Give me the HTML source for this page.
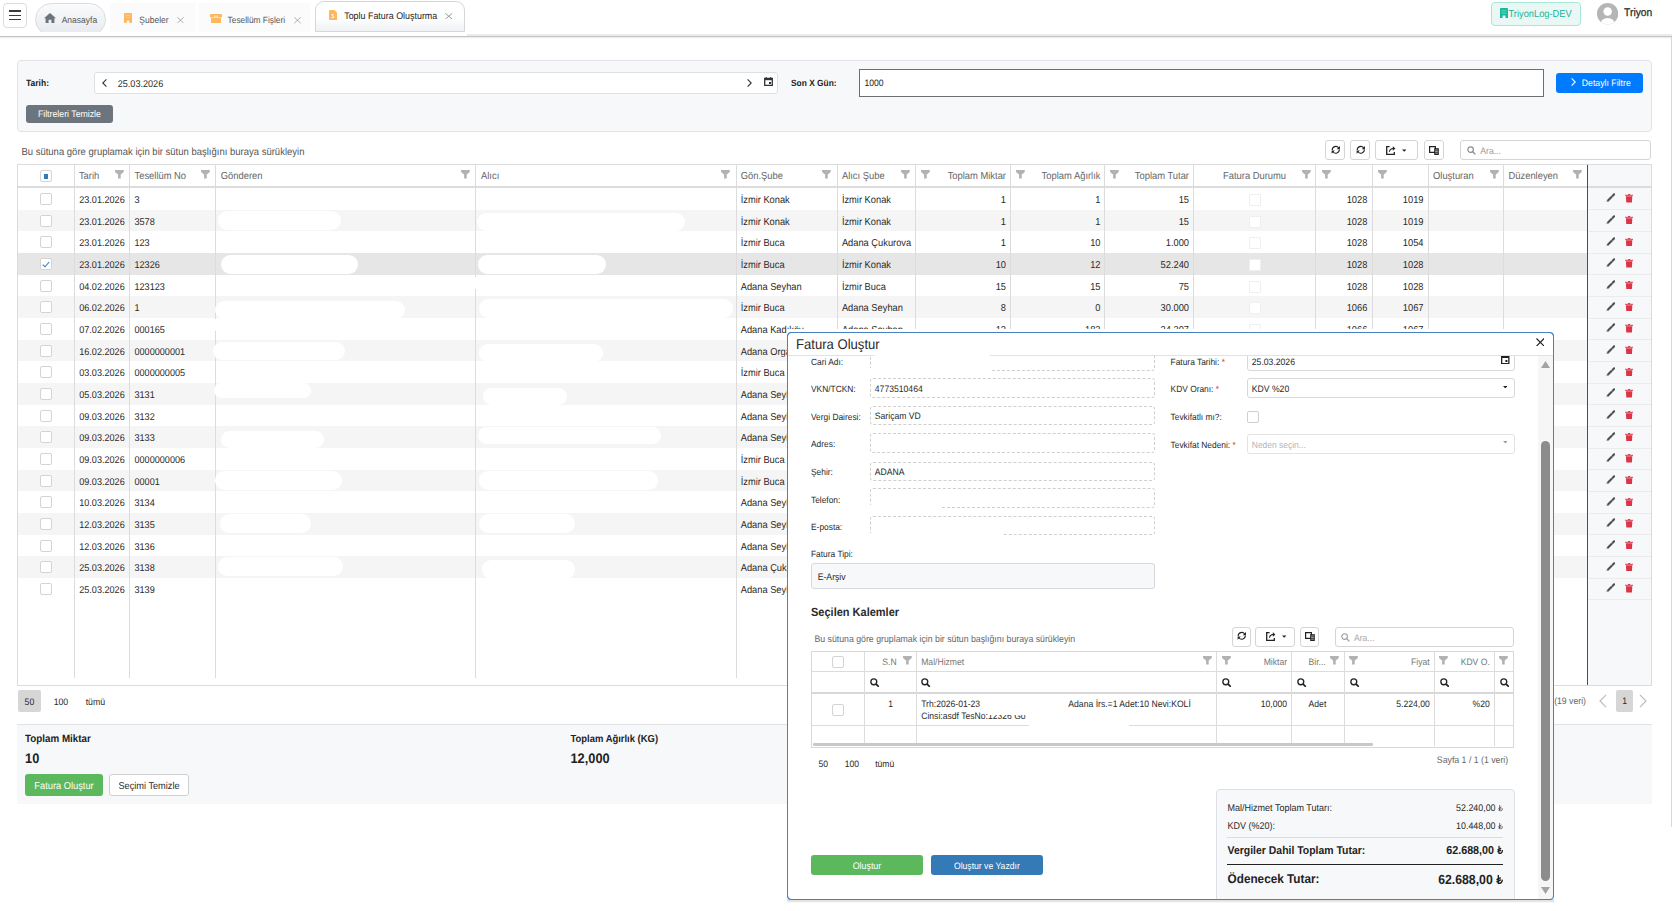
<!DOCTYPE html>
<html><head><meta charset="utf-8"><title>Toplu Fatura Oluşturma</title>
<style>
html,body{margin:0;padding:0;background:#fff;}
body{width:1672px;height:911px;overflow:hidden;position:relative;font-family:"Liberation Sans",sans-serif;color:#333;}
div,svg{position:absolute;box-sizing:border-box;}
svg.il{position:static;display:inline-block;vertical-align:baseline;}
.t{white-space:nowrap;transform:scaleY(1.08);transform-origin:0 50%;text-rendering:geometricPrecision;}
.a{position:absolute;}
</style></head><body>

<div style="left:0.00px;top:0.00px;width:1672.00px;height:36.00px;background:#fff;"></div>
<div style="left:0.00px;top:35.90px;width:1672.00px;height:1.60px;background:#c4c4c4;"></div>
<div style="left:0.00px;top:37.00px;width:1672.00px;height:2.00px;background:linear-gradient(#e8e8e8,#fff);"></div>
<div style="left:3.30px;top:3.30px;width:24.20px;height:25.20px;border:1px solid #dcdcdc;border-radius:4px;background:#fff;"></div>
<div style="left:9.40px;top:10.40px;width:12.10px;height:1.50px;background:#3a3a3a;"></div>
<div style="left:9.40px;top:14.50px;width:12.10px;height:1.50px;background:#3a3a3a;"></div>
<div style="left:9.40px;top:18.60px;width:12.10px;height:1.50px;background:#3a3a3a;"></div>
<div style="left:34px;top:0;width:74px;height:31.7px;overflow:hidden;"><div style="left:1px;top:3px;width:71px;height:33px;border:1px solid #d9dce1;border-radius:17px;background:linear-gradient(#fbfbfc,#e6e9ee);"></div></div>
<svg class="a" style="left:44px;top:12.8px" width="12" height="10" viewBox="0 0 12 10"><path d="M6 0L0 5.2H1.6V10H4.6V6.8H7.4V10H10.4V5.2H12Z" fill="#6c757d"/></svg>
<div class="t" style="left:61.70px;top:12.90px;height:14px;line-height:14px;font-size:8.5px;color:#555;font-weight:normal;">Anasayfa</div>
<div style="left:110.00px;top:3.00px;width:86.00px;height:29.00px;background:#fbfbfb;"></div>
<svg class="a" style="left:124px;top:13px" width="8" height="10" viewBox="0 0 8 10"><path d="M0 1Q0 0 1 0H7Q8 0 8 1V10H5.3V7.5H2.7V10H0Z" fill="#fdb760"/><path d="M1.5 2.3H6.5M1.5 4.3H6.5" stroke="#fdd8a6" stroke-width="0.6"/></svg>
<div class="t" style="left:139.30px;top:12.90px;height:14px;line-height:14px;font-size:8.5px;color:#555;font-weight:normal;">Şubeler</div>
<svg class="a" style="left:177px;top:16.8px" width="7" height="6.5" viewBox="0 0 7 6.5"><path d="M0.3 0.3L6.7 6.2M6.7 0.3L0.3 6.2" stroke="#a8a8a8" stroke-width="0.9"/></svg>
<div style="left:197.50px;top:3.00px;width:112.50px;height:29.00px;background:#fbfbfb;"></div>
<svg class="a" style="left:210px;top:14px" width="12" height="9" viewBox="0 0 12 9"><path d="M0 0.8Q0 0 0.8 0H11.2Q12 0 12 0.8V3.2H0Z" fill="#fdb760"/><path d="M1 3.8H11V8.2Q11 9 10.2 9H1.8Q1 9 1 8.2Z" fill="#fdb760"/><path d="M4 2.2H8" stroke="#fff" stroke-width="0.6"/></svg>
<div class="t" style="left:227.60px;top:13.20px;height:14px;line-height:14px;font-size:8.35px;color:#555;font-weight:normal;">Tesellüm Fişleri</div>
<svg class="a" style="left:294px;top:17px" width="7" height="6.5" viewBox="0 0 7 6.5"><path d="M0.3 0.3L6.7 6.2M6.7 0.3L0.3 6.2" stroke="#a8a8a8" stroke-width="0.9"/></svg>
<div style="left:314.70px;top:0.80px;width:149.90px;height:31.20px;border:1px solid #d6d6d6;border-radius:9px 9px 0 0;background:linear-gradient(#fff 55%,#eff1f4);"></div>
<div style="left:467.00px;top:34.20px;width:1205.00px;height:1.70px;background:#ebebeb;"></div>
<svg class="a" style="left:328.6px;top:9.9px" width="8.2" height="10.2" viewBox="0 0 8.2 10.2"><path d="M0 1Q0 0 1 0H5.4L8.2 2.8V9.2Q8.2 10.2 7.2 10.2H1Q0 10.2 0 9.2Z" fill="#fdb760"/><text x="2.6" y="8.2" font-size="5" fill="#fff" font-family="Liberation Sans">$</text></svg>
<div class="t" style="left:344.20px;top:8.60px;height:14px;line-height:14px;font-size:8.91px;color:#222;font-weight:normal;">Toplu Fatura Oluşturma</div>
<svg class="a" style="left:445.3px;top:12.6px" width="7.6" height="6.5" viewBox="0 0 7.6 6.5"><path d="M0.3 0.3L7.3 6.2M7.3 0.3L0.3 6.2" stroke="#999" stroke-width="1"/></svg>
<div style="left:1491.00px;top:2.10px;width:90.00px;height:23.90px;border:1px solid #a8e6d8;border-radius:4px;background:#e9f8f5;"></div>
<svg class="a" style="left:1499.5px;top:8px" width="8" height="10" viewBox="0 0 8 10"><path d="M0 1Q0 0 1 0H7Q8 0 8 1V10H5.5V7.6H2.5V10H0Z" fill="#17b89a"/><path d="M1.3 2.2H6.7M1.3 3.8H6.7M1.3 5.4H6.7" stroke="#8fe0cf" stroke-width="0.5"/></svg>
<div class="t" style="left:1508.50px;top:7.30px;height:14px;line-height:14px;font-size:9.3px;color:#16b396;font-weight:normal;">TriyonLog-DEV</div>
<svg class="a" style="left:1596.6px;top:3.4px" width="21.3" height="21.3" viewBox="0 0 20 20"><defs><clipPath id="av"><circle cx="10" cy="10" r="10"/></clipPath></defs><circle cx="10" cy="10" r="10" fill="#b5b5b5"/><g clip-path="url(#av)"><circle cx="10" cy="8" r="4" fill="#fff"/><ellipse cx="10" cy="19" rx="6.5" ry="5" fill="#fff"/></g></svg>
<div class="t" style="left:1624.10px;top:7.40px;height:14px;line-height:14px;font-size:10.3px;color:#2a2a2a;font-weight:normal;-webkit-text-stroke:0.25px #2a2a2a;">Triyon</div>
<div style="left:1671.00px;top:37.00px;width:1.00px;height:790.00px;background:#d8d8d8;"></div>
<div style="left:17.00px;top:60.30px;width:1635.00px;height:71.30px;background:#f7f8fa;border:1px solid #e1e4e8;border-radius:4px;"></div>
<div class="t" style="left:26.00px;top:76.00px;height:14px;line-height:14px;font-size:8.5px;color:#222;font-weight:bold;">Tarih:</div>
<div style="left:94.20px;top:72.30px;width:684.20px;height:21.30px;background:#fff;border:1px solid #dde0e4;border-radius:3px;"></div>
<svg class="a" style="left:102px;top:78.5px" width="5" height="8" viewBox="0 0 5 8"><path d="M4.4 0.4L0.8 4L4.4 7.6" stroke="#333" stroke-width="1.1" fill="none"/></svg>
<div class="t" style="left:117.70px;top:76.50px;height:14px;line-height:14px;font-size:9.11px;color:#2a2a2a;font-weight:normal;">25.03.2026</div>
<svg class="a" style="left:746.5px;top:78.5px" width="5" height="8" viewBox="0 0 5 8"><path d="M0.6 0.4L4.2 4L0.6 7.6" stroke="#333" stroke-width="1.1" fill="none"/></svg>
<svg class="a" style="left:763.7px;top:77.2px" width="9" height="9.2" viewBox="0 0 9 9.2"><path d="M0.7 1.5H8.3V8.5H0.7Z" stroke="#333" stroke-width="1.3" fill="none"/><path d="M0.7 1.3H8.3V3.2H0.7Z" fill="#333"/><path d="M2.3 0V1.5M6.7 0V1.5" stroke="#333" stroke-width="1"/><rect x="5" y="5" width="2" height="2" fill="#333"/></svg>
<div class="t" style="left:791.00px;top:75.80px;height:14px;line-height:14px;font-size:8.4px;color:#222;font-weight:bold;">Son X Gün:</div>
<div style="left:859.20px;top:69.00px;width:684.80px;height:27.80px;background:#fff;border:1px solid #6e6e6e;"></div>
<div class="t" style="left:864.50px;top:76.00px;height:14px;line-height:14px;font-size:8.6px;color:#222;font-weight:normal;">1000</div>
<div style="left:1556.00px;top:72.90px;width:87.00px;height:19.90px;background:#007bff;border-radius:3px;"></div>
<svg class="a" style="left:1571px;top:78.3px" width="5" height="8" viewBox="0 0 5 8"><path d="M0.6 0.4L4.2 4L0.6 7.6" stroke="#fff" stroke-width="1.1" fill="none"/></svg>
<div class="t" style="left:1581.80px;top:76.00px;height:14px;line-height:14px;font-size:8.73px;color:#fff;font-weight:normal;">Detaylı Filtre</div>
<div style="left:26.00px;top:104.80px;width:87.00px;height:18.10px;background:#6c757d;border-radius:3px;"></div>
<div class="t" style="left:37.90px;top:106.80px;height:14px;line-height:14px;font-size:8.76px;color:#fff;font-weight:normal;">Filtreleri Temizle</div>
<div class="t" style="left:21.40px;top:145.50px;height:14px;line-height:14px;font-size:9.5px;color:#555;font-weight:normal;">Bu sütuna göre gruplamak için bir sütun başlığını buraya sürükleyin</div>
<div style="left:1325.30px;top:140.20px;width:20.20px;height:20.20px;background:#fff;border:1px solid #d5d5d5;border-radius:3px;"></div>
<svg class="a" style="left:1330.70px;top:145.30px" width="9.6" height="9.6" viewBox="0 0 12 12"><path d="M1.5 6.3A4.5 4.5 0 0 1 9.6 3.6" stroke="#222" stroke-width="1.35" fill="none"/><path d="M11.2 1.2V5.2H7.2Z" fill="#222"/><path d="M10.5 5.7A4.5 4.5 0 0 1 2.4 8.4" stroke="#222" stroke-width="1.35" fill="none"/><path d="M0.8 10.8V6.8H4.8Z" fill="#222"/></svg>
<div style="left:1350.30px;top:140.20px;width:20.20px;height:20.20px;background:#fff;border:1px solid #d5d5d5;border-radius:3px;"></div>
<svg class="a" style="left:1355.70px;top:145.30px" width="9.6" height="9.6" viewBox="0 0 12 12"><path d="M1.5 6.3A4.5 4.5 0 0 1 9.6 3.6" stroke="#222" stroke-width="1.35" fill="none"/><path d="M11.2 1.2V5.2H7.2Z" fill="#222"/><path d="M10.5 5.7A4.5 4.5 0 0 1 2.4 8.4" stroke="#222" stroke-width="1.35" fill="none"/><path d="M0.8 10.8V6.8H4.8Z" fill="#222"/></svg>
<div style="left:1375.40px;top:140.20px;width:42.90px;height:20.20px;background:#fff;border:1px solid #d5d5d5;border-radius:3px;"></div>
<svg class="a" style="left:1386.00px;top:145.70px" width="21" height="9" viewBox="0 0 21 9"><path d="M3.6 0.7H0.7V8.3H8.3V6" stroke="#222" stroke-width="1.3" fill="none"/><path d="M3.4 5.8Q3.8 2.6 7.4 2.5" stroke="#222" stroke-width="1.2" fill="none"/><path d="M6.8 0.3V4.8L9.4 2.5Z" fill="#222"/><path d="M16 3.6H20.4L18.2 5.8Z" fill="#222"/></svg>
<div style="left:1423.50px;top:140.20px;width:20.20px;height:20.20px;background:#fff;border:1px solid #d5d5d5;border-radius:3px;"></div>
<svg class="a" style="left:1428.50px;top:146.00px" width="10" height="9" viewBox="0 0 10 9"><path d="M0.6 0.6H6.4V6.4H0.6Z" stroke="#222" stroke-width="1.2" fill="#fff"/><path d="M5.2 2.2H9.8V9H5.2Z" fill="#222"/><path d="M6.2 4H8.8M6.2 5.6H8.8M6.2 7.2H8.8" stroke="#fff" stroke-width="0.6"/></svg>
<div style="left:1460.40px;top:140.20px;width:190.80px;height:20.20px;background:#fff;border:1px solid #d5d5d5;border-radius:3px;"></div>
<svg class="a" style="left:1466.50px;top:145.80px" width="9" height="9" viewBox="0 0 10 10"><circle cx="4" cy="4" r="3.1" stroke="#888" stroke-width="1.3" fill="none"/><path d="M6.3 6.3L9.3 9.3" stroke="#888" stroke-width="1.5"/></svg>
<div class="t" style="left:1480.20px;top:143.50px;height:14px;line-height:14px;font-size:8.7px;color:#999;font-weight:normal;">Ara...</div>
<div style="left:17.30px;top:164.30px;width:1634.30px;height:522.10px;background:#fff;border:1px solid #dcdcdc;"></div>
<div style="left:1588.00px;top:165.30px;width:62.60px;height:520.10px;background:#f7f8fa;"></div>
<div style="left:1588.00px;top:209.17px;width:62.60px;height:1.00px;background:#ececec;"></div>
<div style="left:18.30px;top:209.67px;width:1568.90px;height:21.67px;background:#f5f5f5;"></div>
<div style="left:1588.00px;top:230.83px;width:62.60px;height:1.00px;background:#ececec;"></div>
<div style="left:1588.00px;top:252.50px;width:62.60px;height:1.00px;background:#ececec;"></div>
<div style="left:18.30px;top:253.00px;width:1568.90px;height:21.67px;background:#e6e6e6;"></div>
<div style="left:1588.00px;top:274.17px;width:62.60px;height:1.00px;background:#ececec;"></div>
<div style="left:1588.00px;top:295.83px;width:62.60px;height:1.00px;background:#ececec;"></div>
<div style="left:18.30px;top:296.33px;width:1568.90px;height:21.67px;background:#f5f5f5;"></div>
<div style="left:1588.00px;top:317.50px;width:62.60px;height:1.00px;background:#ececec;"></div>
<div style="left:1588.00px;top:339.17px;width:62.60px;height:1.00px;background:#ececec;"></div>
<div style="left:18.30px;top:339.67px;width:1568.90px;height:21.67px;background:#f5f5f5;"></div>
<div style="left:1588.00px;top:360.83px;width:62.60px;height:1.00px;background:#ececec;"></div>
<div style="left:1588.00px;top:382.50px;width:62.60px;height:1.00px;background:#ececec;"></div>
<div style="left:18.30px;top:383.00px;width:1568.90px;height:21.67px;background:#f5f5f5;"></div>
<div style="left:1588.00px;top:404.17px;width:62.60px;height:1.00px;background:#ececec;"></div>
<div style="left:1588.00px;top:425.83px;width:62.60px;height:1.00px;background:#ececec;"></div>
<div style="left:18.30px;top:426.33px;width:1568.90px;height:21.67px;background:#f5f5f5;"></div>
<div style="left:1588.00px;top:447.50px;width:62.60px;height:1.00px;background:#ececec;"></div>
<div style="left:1588.00px;top:469.17px;width:62.60px;height:1.00px;background:#ececec;"></div>
<div style="left:18.30px;top:469.67px;width:1568.90px;height:21.67px;background:#f5f5f5;"></div>
<div style="left:1588.00px;top:490.83px;width:62.60px;height:1.00px;background:#ececec;"></div>
<div style="left:1588.00px;top:512.50px;width:62.60px;height:1.00px;background:#ececec;"></div>
<div style="left:18.30px;top:513.00px;width:1568.90px;height:21.67px;background:#f5f5f5;"></div>
<div style="left:1588.00px;top:534.17px;width:62.60px;height:1.00px;background:#ececec;"></div>
<div style="left:1588.00px;top:555.83px;width:62.60px;height:1.00px;background:#ececec;"></div>
<div style="left:18.30px;top:556.33px;width:1568.90px;height:21.67px;background:#f5f5f5;"></div>
<div style="left:1588.00px;top:577.50px;width:62.60px;height:1.00px;background:#ececec;"></div>
<div style="left:1588.00px;top:599.17px;width:62.60px;height:1.00px;background:#ececec;"></div>
<div style="left:18.30px;top:186.10px;width:1632.30px;height:2.00px;background:#dcdcdc;"></div>
<div style="left:73.90px;top:165.30px;width:1.00px;height:512.30px;background:#dcdcdc;"></div>
<div style="left:128.90px;top:165.30px;width:1.00px;height:512.30px;background:#dcdcdc;"></div>
<div style="left:214.80px;top:165.30px;width:1.00px;height:512.30px;background:#dcdcdc;"></div>
<div style="left:474.80px;top:165.30px;width:1.00px;height:512.30px;background:#dcdcdc;"></div>
<div style="left:736.00px;top:165.30px;width:1.00px;height:512.30px;background:#dcdcdc;"></div>
<div style="left:836.90px;top:165.30px;width:1.00px;height:512.30px;background:#dcdcdc;"></div>
<div style="left:915.00px;top:165.30px;width:1.00px;height:512.30px;background:#dcdcdc;"></div>
<div style="left:1009.80px;top:165.30px;width:1.00px;height:512.30px;background:#dcdcdc;"></div>
<div style="left:1104.30px;top:165.30px;width:1.00px;height:512.30px;background:#dcdcdc;"></div>
<div style="left:1193.40px;top:165.30px;width:1.00px;height:512.30px;background:#dcdcdc;"></div>
<div style="left:1314.90px;top:165.30px;width:1.00px;height:512.30px;background:#dcdcdc;"></div>
<div style="left:1372.00px;top:165.30px;width:1.00px;height:512.30px;background:#dcdcdc;"></div>
<div style="left:1427.90px;top:165.30px;width:1.00px;height:512.30px;background:#dcdcdc;"></div>
<div style="left:1502.90px;top:165.30px;width:1.00px;height:512.30px;background:#dcdcdc;"></div>
<div style="left:1586.60px;top:165.30px;width:1.50px;height:520.10px;background:#4a4f55;"></div>
<div style="left:40.30px;top:170.30px;width:11.50px;height:12.20px;background:#fff;border:1px solid #d4d4d4;border-radius:2px;"></div>
<div style="left:44.00px;top:173.90px;width:4.00px;height:5.00px;background:#337ab7;"></div>
<div class="t" style="left:78.90px;top:169.10px;height:14px;line-height:14px;font-size:9.4px;color:#666;font-weight:normal;">Tarih</div>
<svg class="a" style="left:114.90px;top:169.90px" width="9" height="9" viewBox="0 0 9 9"><path d="M0 0H8.8V1.6Q8.8 2.5 5.7 4.4V8.6H3.1V4.4Q0 2.5 0 1.6Z" fill="#b2b2b2"/></svg>
<div class="t" style="left:134.50px;top:169.10px;height:14px;line-height:14px;font-size:9.4px;color:#666;font-weight:normal;">Tesellüm No</div>
<svg class="a" style="left:200.60px;top:169.90px" width="9" height="9" viewBox="0 0 9 9"><path d="M0 0H8.8V1.6Q8.8 2.5 5.7 4.4V8.6H3.1V4.4Q0 2.5 0 1.6Z" fill="#b2b2b2"/></svg>
<div class="t" style="left:220.80px;top:169.10px;height:14px;line-height:14px;font-size:9.4px;color:#666;font-weight:normal;">Gönderen</div>
<svg class="a" style="left:460.80px;top:169.90px" width="9" height="9" viewBox="0 0 9 9"><path d="M0 0H8.8V1.6Q8.8 2.5 5.7 4.4V8.6H3.1V4.4Q0 2.5 0 1.6Z" fill="#b2b2b2"/></svg>
<div class="t" style="left:481.00px;top:169.10px;height:14px;line-height:14px;font-size:9.4px;color:#666;font-weight:normal;">Alıcı</div>
<svg class="a" style="left:721.20px;top:169.90px" width="9" height="9" viewBox="0 0 9 9"><path d="M0 0H8.8V1.6Q8.8 2.5 5.7 4.4V8.6H3.1V4.4Q0 2.5 0 1.6Z" fill="#b2b2b2"/></svg>
<div class="t" style="left:740.70px;top:169.10px;height:14px;line-height:14px;font-size:9.4px;color:#666;font-weight:normal;">Gön.Şube</div>
<svg class="a" style="left:822.40px;top:169.90px" width="9" height="9" viewBox="0 0 9 9"><path d="M0 0H8.8V1.6Q8.8 2.5 5.7 4.4V8.6H3.1V4.4Q0 2.5 0 1.6Z" fill="#b2b2b2"/></svg>
<div class="t" style="left:841.90px;top:169.10px;height:14px;line-height:14px;font-size:9.4px;color:#666;font-weight:normal;">Alıcı Şube</div>
<svg class="a" style="left:900.60px;top:169.90px" width="9" height="9" viewBox="0 0 9 9"><path d="M0 0H8.8V1.6Q8.8 2.5 5.7 4.4V8.6H3.1V4.4Q0 2.5 0 1.6Z" fill="#b2b2b2"/></svg>
<svg class="a" style="left:920.60px;top:169.90px" width="9" height="9" viewBox="0 0 9 9"><path d="M0 0H8.8V1.6Q8.8 2.5 5.7 4.4V8.6H3.1V4.4Q0 2.5 0 1.6Z" fill="#b2b2b2"/></svg>
<div class="t" style="right:666.00px;top:169.10px;height:14px;line-height:14px;font-size:9.4px;color:#666;font-weight:normal;">Toplam Miktar</div>
<svg class="a" style="left:1015.60px;top:169.90px" width="9" height="9" viewBox="0 0 9 9"><path d="M0 0H8.8V1.6Q8.8 2.5 5.7 4.4V8.6H3.1V4.4Q0 2.5 0 1.6Z" fill="#b2b2b2"/></svg>
<div class="t" style="right:571.50px;top:169.10px;height:14px;line-height:14px;font-size:9.4px;color:#666;font-weight:normal;">Toplam Ağırlık</div>
<svg class="a" style="left:1109.60px;top:169.90px" width="9" height="9" viewBox="0 0 9 9"><path d="M0 0H8.8V1.6Q8.8 2.5 5.7 4.4V8.6H3.1V4.4Q0 2.5 0 1.6Z" fill="#b2b2b2"/></svg>
<div class="t" style="right:483.00px;top:169.10px;height:14px;line-height:14px;font-size:9.4px;color:#666;font-weight:normal;">Toplam Tutar</div>
<div class="t" style="left:1223.00px;top:169.10px;height:14px;line-height:14px;font-size:9.4px;color:#666;font-weight:normal;">Fatura Durumu</div>
<svg class="a" style="left:1301.60px;top:169.90px" width="9" height="9" viewBox="0 0 9 9"><path d="M0 0H8.8V1.6Q8.8 2.5 5.7 4.4V8.6H3.1V4.4Q0 2.5 0 1.6Z" fill="#b2b2b2"/></svg>
<svg class="a" style="left:1321.60px;top:169.90px" width="9" height="9" viewBox="0 0 9 9"><path d="M0 0H8.8V1.6Q8.8 2.5 5.7 4.4V8.6H3.1V4.4Q0 2.5 0 1.6Z" fill="#b2b2b2"/></svg>
<svg class="a" style="left:1377.60px;top:169.90px" width="9" height="9" viewBox="0 0 9 9"><path d="M0 0H8.8V1.6Q8.8 2.5 5.7 4.4V8.6H3.1V4.4Q0 2.5 0 1.6Z" fill="#b2b2b2"/></svg>
<div class="t" style="left:1433.00px;top:169.10px;height:14px;line-height:14px;font-size:9.4px;color:#666;font-weight:normal;">Oluşturan</div>
<svg class="a" style="left:1489.60px;top:169.90px" width="9" height="9" viewBox="0 0 9 9"><path d="M0 0H8.8V1.6Q8.8 2.5 5.7 4.4V8.6H3.1V4.4Q0 2.5 0 1.6Z" fill="#b2b2b2"/></svg>
<div class="t" style="left:1508.50px;top:169.10px;height:14px;line-height:14px;font-size:9.4px;color:#666;font-weight:normal;">Düzenleyen</div>
<svg class="a" style="left:1572.60px;top:169.90px" width="9" height="9" viewBox="0 0 9 9"><path d="M0 0H8.8V1.6Q8.8 2.5 5.7 4.4V8.6H3.1V4.4Q0 2.5 0 1.6Z" fill="#b2b2b2"/></svg>
<div style="left:40.20px;top:192.83px;width:11.80px;height:12.20px;background:#fff;border:1px solid #d4d4d4;border-radius:2px;"></div>
<div class="t" style="left:79.20px;top:192.83px;height:14px;line-height:14px;font-size:9.11px;color:#2a2a2a;font-weight:normal;">23.01.2026</div>
<div class="t" style="left:134.50px;top:192.83px;height:14px;line-height:14px;font-size:9.11px;color:#2a2a2a;font-weight:normal;">3</div>
<div class="t" style="left:740.70px;top:192.83px;height:14px;line-height:14px;font-size:9.3px;color:#2a2a2a;font-weight:normal;">İzmir Konak</div>
<div class="t" style="left:841.90px;top:192.83px;height:14px;line-height:14px;font-size:9.3px;color:#2a2a2a;font-weight:normal;">İzmir Konak</div>
<div class="t" style="right:666.00px;top:192.83px;height:14px;line-height:14px;font-size:9.3px;color:#2a2a2a;font-weight:normal;">1</div>
<div class="t" style="right:571.50px;top:192.83px;height:14px;line-height:14px;font-size:9.3px;color:#2a2a2a;font-weight:normal;">1</div>
<div class="t" style="right:483.00px;top:192.83px;height:14px;line-height:14px;font-size:9.3px;color:#2a2a2a;font-weight:normal;">15</div>
<div style="left:1248.50px;top:193.83px;width:12.10px;height:12.00px;background:#fff;border:1px solid #efefef;border-radius:1px;"></div>
<div class="t" style="right:304.70px;top:192.83px;height:14px;line-height:14px;font-size:9.3px;color:#2a2a2a;font-weight:normal;">1028</div>
<div class="t" style="right:248.50px;top:192.83px;height:14px;line-height:14px;font-size:9.3px;color:#2a2a2a;font-weight:normal;">1019</div>
<svg class="a" style="left:1605.6px;top:193.23px" width="9.5" height="9.5" viewBox="0 0 10 10"><path d="M1.6 8.4L6.3 3.7" stroke="#505050" stroke-width="2.3"/><path d="M1.4 8.6L0.9 9.1" stroke="#505050" stroke-width="1.4"/><path d="M7.1 2.9L8.6 1.4" stroke="#505050" stroke-width="2.3" stroke-linecap="round"/></svg>
<svg class="a" style="left:1625px;top:194.23px" width="8.2" height="8.6" viewBox="0 0 8 8.6"><path d="M0 0.8H8V1.8H0Z" fill="#dc3545"/><path d="M3 0H5V1H3Z" fill="#dc3545"/><path d="M0.8 2.2H7.2L6.8 8.6H1.2Z" fill="#dc3545"/></svg>
<div style="left:40.20px;top:214.50px;width:11.80px;height:12.20px;background:#fff;border:1px solid #d4d4d4;border-radius:2px;"></div>
<div class="t" style="left:79.20px;top:214.50px;height:14px;line-height:14px;font-size:9.11px;color:#2a2a2a;font-weight:normal;">23.01.2026</div>
<div class="t" style="left:134.50px;top:214.50px;height:14px;line-height:14px;font-size:9.11px;color:#2a2a2a;font-weight:normal;">3578</div>
<div class="t" style="left:740.70px;top:214.50px;height:14px;line-height:14px;font-size:9.3px;color:#2a2a2a;font-weight:normal;">İzmir Konak</div>
<div class="t" style="left:841.90px;top:214.50px;height:14px;line-height:14px;font-size:9.3px;color:#2a2a2a;font-weight:normal;">İzmir Konak</div>
<div class="t" style="right:666.00px;top:214.50px;height:14px;line-height:14px;font-size:9.3px;color:#2a2a2a;font-weight:normal;">1</div>
<div class="t" style="right:571.50px;top:214.50px;height:14px;line-height:14px;font-size:9.3px;color:#2a2a2a;font-weight:normal;">1</div>
<div class="t" style="right:483.00px;top:214.50px;height:14px;line-height:14px;font-size:9.3px;color:#2a2a2a;font-weight:normal;">15</div>
<div style="left:1248.50px;top:215.50px;width:12.10px;height:12.00px;background:#fff;border:1px solid #efefef;border-radius:1px;"></div>
<div class="t" style="right:304.70px;top:214.50px;height:14px;line-height:14px;font-size:9.3px;color:#2a2a2a;font-weight:normal;">1028</div>
<div class="t" style="right:248.50px;top:214.50px;height:14px;line-height:14px;font-size:9.3px;color:#2a2a2a;font-weight:normal;">1019</div>
<svg class="a" style="left:1605.6px;top:214.90px" width="9.5" height="9.5" viewBox="0 0 10 10"><path d="M1.6 8.4L6.3 3.7" stroke="#505050" stroke-width="2.3"/><path d="M1.4 8.6L0.9 9.1" stroke="#505050" stroke-width="1.4"/><path d="M7.1 2.9L8.6 1.4" stroke="#505050" stroke-width="2.3" stroke-linecap="round"/></svg>
<svg class="a" style="left:1625px;top:215.90px" width="8.2" height="8.6" viewBox="0 0 8 8.6"><path d="M0 0.8H8V1.8H0Z" fill="#dc3545"/><path d="M3 0H5V1H3Z" fill="#dc3545"/><path d="M0.8 2.2H7.2L6.8 8.6H1.2Z" fill="#dc3545"/></svg>
<div style="left:40.20px;top:236.17px;width:11.80px;height:12.20px;background:#fff;border:1px solid #d4d4d4;border-radius:2px;"></div>
<div class="t" style="left:79.20px;top:236.17px;height:14px;line-height:14px;font-size:9.11px;color:#2a2a2a;font-weight:normal;">23.01.2026</div>
<div class="t" style="left:134.50px;top:236.17px;height:14px;line-height:14px;font-size:9.11px;color:#2a2a2a;font-weight:normal;">123</div>
<div class="t" style="left:740.70px;top:236.17px;height:14px;line-height:14px;font-size:9.3px;color:#2a2a2a;font-weight:normal;">İzmir Buca</div>
<div class="t" style="left:841.90px;top:236.17px;height:14px;line-height:14px;font-size:9.3px;color:#2a2a2a;font-weight:normal;">Adana Çukurova</div>
<div class="t" style="right:666.00px;top:236.17px;height:14px;line-height:14px;font-size:9.3px;color:#2a2a2a;font-weight:normal;">1</div>
<div class="t" style="right:571.50px;top:236.17px;height:14px;line-height:14px;font-size:9.3px;color:#2a2a2a;font-weight:normal;">10</div>
<div class="t" style="right:483.00px;top:236.17px;height:14px;line-height:14px;font-size:9.3px;color:#2a2a2a;font-weight:normal;">1.000</div>
<div style="left:1248.50px;top:237.17px;width:12.10px;height:12.00px;background:#fff;border:1px solid #efefef;border-radius:1px;"></div>
<div class="t" style="right:304.70px;top:236.17px;height:14px;line-height:14px;font-size:9.3px;color:#2a2a2a;font-weight:normal;">1028</div>
<div class="t" style="right:248.50px;top:236.17px;height:14px;line-height:14px;font-size:9.3px;color:#2a2a2a;font-weight:normal;">1054</div>
<svg class="a" style="left:1605.6px;top:236.57px" width="9.5" height="9.5" viewBox="0 0 10 10"><path d="M1.6 8.4L6.3 3.7" stroke="#505050" stroke-width="2.3"/><path d="M1.4 8.6L0.9 9.1" stroke="#505050" stroke-width="1.4"/><path d="M7.1 2.9L8.6 1.4" stroke="#505050" stroke-width="2.3" stroke-linecap="round"/></svg>
<svg class="a" style="left:1625px;top:237.57px" width="8.2" height="8.6" viewBox="0 0 8 8.6"><path d="M0 0.8H8V1.8H0Z" fill="#dc3545"/><path d="M3 0H5V1H3Z" fill="#dc3545"/><path d="M0.8 2.2H7.2L6.8 8.6H1.2Z" fill="#dc3545"/></svg>
<div style="left:40.20px;top:257.83px;width:11.80px;height:12.20px;background:#fff;border:1px solid #d4d4d4;border-radius:2px;"></div>
<svg class="a" style="left:42px;top:260.83px" width="8" height="7" viewBox="0 0 8 7"><path d="M0.8 3.6L3 5.8L7.2 1" stroke="#337ab7" stroke-width="1.1" fill="none"/></svg>
<div class="t" style="left:79.20px;top:257.83px;height:14px;line-height:14px;font-size:9.11px;color:#2a2a2a;font-weight:normal;">23.01.2026</div>
<div class="t" style="left:134.50px;top:257.83px;height:14px;line-height:14px;font-size:9.11px;color:#2a2a2a;font-weight:normal;">12326</div>
<div class="t" style="left:740.70px;top:257.83px;height:14px;line-height:14px;font-size:9.3px;color:#2a2a2a;font-weight:normal;">İzmir Buca</div>
<div class="t" style="left:841.90px;top:257.83px;height:14px;line-height:14px;font-size:9.3px;color:#2a2a2a;font-weight:normal;">İzmir Konak</div>
<div class="t" style="right:666.00px;top:257.83px;height:14px;line-height:14px;font-size:9.3px;color:#2a2a2a;font-weight:normal;">10</div>
<div class="t" style="right:571.50px;top:257.83px;height:14px;line-height:14px;font-size:9.3px;color:#2a2a2a;font-weight:normal;">12</div>
<div class="t" style="right:483.00px;top:257.83px;height:14px;line-height:14px;font-size:9.3px;color:#2a2a2a;font-weight:normal;">52.240</div>
<div style="left:1248.50px;top:258.83px;width:12.10px;height:12.00px;background:#fff;border:1px solid #efefef;border-radius:1px;"></div>
<div class="t" style="right:304.70px;top:257.83px;height:14px;line-height:14px;font-size:9.3px;color:#2a2a2a;font-weight:normal;">1028</div>
<div class="t" style="right:248.50px;top:257.83px;height:14px;line-height:14px;font-size:9.3px;color:#2a2a2a;font-weight:normal;">1028</div>
<svg class="a" style="left:1605.6px;top:258.23px" width="9.5" height="9.5" viewBox="0 0 10 10"><path d="M1.6 8.4L6.3 3.7" stroke="#505050" stroke-width="2.3"/><path d="M1.4 8.6L0.9 9.1" stroke="#505050" stroke-width="1.4"/><path d="M7.1 2.9L8.6 1.4" stroke="#505050" stroke-width="2.3" stroke-linecap="round"/></svg>
<svg class="a" style="left:1625px;top:259.23px" width="8.2" height="8.6" viewBox="0 0 8 8.6"><path d="M0 0.8H8V1.8H0Z" fill="#dc3545"/><path d="M3 0H5V1H3Z" fill="#dc3545"/><path d="M0.8 2.2H7.2L6.8 8.6H1.2Z" fill="#dc3545"/></svg>
<div style="left:40.20px;top:279.50px;width:11.80px;height:12.20px;background:#fff;border:1px solid #d4d4d4;border-radius:2px;"></div>
<div class="t" style="left:79.20px;top:279.50px;height:14px;line-height:14px;font-size:9.11px;color:#2a2a2a;font-weight:normal;">04.02.2026</div>
<div class="t" style="left:134.50px;top:279.50px;height:14px;line-height:14px;font-size:9.11px;color:#2a2a2a;font-weight:normal;">123123</div>
<div class="t" style="left:740.70px;top:279.50px;height:14px;line-height:14px;font-size:9.3px;color:#2a2a2a;font-weight:normal;">Adana Seyhan</div>
<div class="t" style="left:841.90px;top:279.50px;height:14px;line-height:14px;font-size:9.3px;color:#2a2a2a;font-weight:normal;">İzmir Buca</div>
<div class="t" style="right:666.00px;top:279.50px;height:14px;line-height:14px;font-size:9.3px;color:#2a2a2a;font-weight:normal;">15</div>
<div class="t" style="right:571.50px;top:279.50px;height:14px;line-height:14px;font-size:9.3px;color:#2a2a2a;font-weight:normal;">15</div>
<div class="t" style="right:483.00px;top:279.50px;height:14px;line-height:14px;font-size:9.3px;color:#2a2a2a;font-weight:normal;">75</div>
<div style="left:1248.50px;top:280.50px;width:12.10px;height:12.00px;background:#fff;border:1px solid #efefef;border-radius:1px;"></div>
<div class="t" style="right:304.70px;top:279.50px;height:14px;line-height:14px;font-size:9.3px;color:#2a2a2a;font-weight:normal;">1028</div>
<div class="t" style="right:248.50px;top:279.50px;height:14px;line-height:14px;font-size:9.3px;color:#2a2a2a;font-weight:normal;">1028</div>
<svg class="a" style="left:1605.6px;top:279.90px" width="9.5" height="9.5" viewBox="0 0 10 10"><path d="M1.6 8.4L6.3 3.7" stroke="#505050" stroke-width="2.3"/><path d="M1.4 8.6L0.9 9.1" stroke="#505050" stroke-width="1.4"/><path d="M7.1 2.9L8.6 1.4" stroke="#505050" stroke-width="2.3" stroke-linecap="round"/></svg>
<svg class="a" style="left:1625px;top:280.90px" width="8.2" height="8.6" viewBox="0 0 8 8.6"><path d="M0 0.8H8V1.8H0Z" fill="#dc3545"/><path d="M3 0H5V1H3Z" fill="#dc3545"/><path d="M0.8 2.2H7.2L6.8 8.6H1.2Z" fill="#dc3545"/></svg>
<div style="left:40.20px;top:301.17px;width:11.80px;height:12.20px;background:#fff;border:1px solid #d4d4d4;border-radius:2px;"></div>
<div class="t" style="left:79.20px;top:301.17px;height:14px;line-height:14px;font-size:9.11px;color:#2a2a2a;font-weight:normal;">06.02.2026</div>
<div class="t" style="left:134.50px;top:301.17px;height:14px;line-height:14px;font-size:9.11px;color:#2a2a2a;font-weight:normal;">1</div>
<div class="t" style="left:740.70px;top:301.17px;height:14px;line-height:14px;font-size:9.3px;color:#2a2a2a;font-weight:normal;">İzmir Buca</div>
<div class="t" style="left:841.90px;top:301.17px;height:14px;line-height:14px;font-size:9.3px;color:#2a2a2a;font-weight:normal;">Adana Seyhan</div>
<div class="t" style="right:666.00px;top:301.17px;height:14px;line-height:14px;font-size:9.3px;color:#2a2a2a;font-weight:normal;">8</div>
<div class="t" style="right:571.50px;top:301.17px;height:14px;line-height:14px;font-size:9.3px;color:#2a2a2a;font-weight:normal;">0</div>
<div class="t" style="right:483.00px;top:301.17px;height:14px;line-height:14px;font-size:9.3px;color:#2a2a2a;font-weight:normal;">30.000</div>
<div style="left:1248.50px;top:302.17px;width:12.10px;height:12.00px;background:#fff;border:1px solid #efefef;border-radius:1px;"></div>
<div class="t" style="right:304.70px;top:301.17px;height:14px;line-height:14px;font-size:9.3px;color:#2a2a2a;font-weight:normal;">1066</div>
<div class="t" style="right:248.50px;top:301.17px;height:14px;line-height:14px;font-size:9.3px;color:#2a2a2a;font-weight:normal;">1067</div>
<svg class="a" style="left:1605.6px;top:301.57px" width="9.5" height="9.5" viewBox="0 0 10 10"><path d="M1.6 8.4L6.3 3.7" stroke="#505050" stroke-width="2.3"/><path d="M1.4 8.6L0.9 9.1" stroke="#505050" stroke-width="1.4"/><path d="M7.1 2.9L8.6 1.4" stroke="#505050" stroke-width="2.3" stroke-linecap="round"/></svg>
<svg class="a" style="left:1625px;top:302.57px" width="8.2" height="8.6" viewBox="0 0 8 8.6"><path d="M0 0.8H8V1.8H0Z" fill="#dc3545"/><path d="M3 0H5V1H3Z" fill="#dc3545"/><path d="M0.8 2.2H7.2L6.8 8.6H1.2Z" fill="#dc3545"/></svg>
<div style="left:40.20px;top:322.83px;width:11.80px;height:12.20px;background:#fff;border:1px solid #d4d4d4;border-radius:2px;"></div>
<div class="t" style="left:79.20px;top:322.83px;height:14px;line-height:14px;font-size:9.11px;color:#2a2a2a;font-weight:normal;">07.02.2026</div>
<div class="t" style="left:134.50px;top:322.83px;height:14px;line-height:14px;font-size:9.11px;color:#2a2a2a;font-weight:normal;">000165</div>
<div class="t" style="left:740.70px;top:322.83px;height:14px;line-height:14px;font-size:9.3px;color:#2a2a2a;font-weight:normal;">Adana Kadıköy</div>
<div class="t" style="left:841.90px;top:322.83px;height:14px;line-height:14px;font-size:9.3px;color:#2a2a2a;font-weight:normal;">Adana Seyhan</div>
<div class="t" style="right:666.00px;top:322.83px;height:14px;line-height:14px;font-size:9.3px;color:#2a2a2a;font-weight:normal;">12</div>
<div class="t" style="right:571.50px;top:322.83px;height:14px;line-height:14px;font-size:9.3px;color:#2a2a2a;font-weight:normal;">183</div>
<div class="t" style="right:483.00px;top:322.83px;height:14px;line-height:14px;font-size:9.3px;color:#2a2a2a;font-weight:normal;">24.307</div>
<div style="left:1248.50px;top:323.83px;width:12.10px;height:12.00px;background:#fff;border:1px solid #efefef;border-radius:1px;"></div>
<div class="t" style="right:304.70px;top:322.83px;height:14px;line-height:14px;font-size:9.3px;color:#2a2a2a;font-weight:normal;">1066</div>
<div class="t" style="right:248.50px;top:322.83px;height:14px;line-height:14px;font-size:9.3px;color:#2a2a2a;font-weight:normal;">1067</div>
<svg class="a" style="left:1605.6px;top:323.23px" width="9.5" height="9.5" viewBox="0 0 10 10"><path d="M1.6 8.4L6.3 3.7" stroke="#505050" stroke-width="2.3"/><path d="M1.4 8.6L0.9 9.1" stroke="#505050" stroke-width="1.4"/><path d="M7.1 2.9L8.6 1.4" stroke="#505050" stroke-width="2.3" stroke-linecap="round"/></svg>
<svg class="a" style="left:1625px;top:324.23px" width="8.2" height="8.6" viewBox="0 0 8 8.6"><path d="M0 0.8H8V1.8H0Z" fill="#dc3545"/><path d="M3 0H5V1H3Z" fill="#dc3545"/><path d="M0.8 2.2H7.2L6.8 8.6H1.2Z" fill="#dc3545"/></svg>
<div style="left:40.20px;top:344.50px;width:11.80px;height:12.20px;background:#fff;border:1px solid #d4d4d4;border-radius:2px;"></div>
<div class="t" style="left:79.20px;top:344.50px;height:14px;line-height:14px;font-size:9.11px;color:#2a2a2a;font-weight:normal;">16.02.2026</div>
<div class="t" style="left:134.50px;top:344.50px;height:14px;line-height:14px;font-size:9.11px;color:#2a2a2a;font-weight:normal;">0000000001</div>
<div class="t" style="left:740.70px;top:344.50px;height:14px;line-height:14px;font-size:9.3px;color:#2a2a2a;font-weight:normal;">Adana Organize</div>
<svg class="a" style="left:1605.6px;top:344.90px" width="9.5" height="9.5" viewBox="0 0 10 10"><path d="M1.6 8.4L6.3 3.7" stroke="#505050" stroke-width="2.3"/><path d="M1.4 8.6L0.9 9.1" stroke="#505050" stroke-width="1.4"/><path d="M7.1 2.9L8.6 1.4" stroke="#505050" stroke-width="2.3" stroke-linecap="round"/></svg>
<svg class="a" style="left:1625px;top:345.90px" width="8.2" height="8.6" viewBox="0 0 8 8.6"><path d="M0 0.8H8V1.8H0Z" fill="#dc3545"/><path d="M3 0H5V1H3Z" fill="#dc3545"/><path d="M0.8 2.2H7.2L6.8 8.6H1.2Z" fill="#dc3545"/></svg>
<div style="left:40.20px;top:366.17px;width:11.80px;height:12.20px;background:#fff;border:1px solid #d4d4d4;border-radius:2px;"></div>
<div class="t" style="left:79.20px;top:366.17px;height:14px;line-height:14px;font-size:9.11px;color:#2a2a2a;font-weight:normal;">03.03.2026</div>
<div class="t" style="left:134.50px;top:366.17px;height:14px;line-height:14px;font-size:9.11px;color:#2a2a2a;font-weight:normal;">0000000005</div>
<div class="t" style="left:740.70px;top:366.17px;height:14px;line-height:14px;font-size:9.3px;color:#2a2a2a;font-weight:normal;">İzmir Buca</div>
<svg class="a" style="left:1605.6px;top:366.57px" width="9.5" height="9.5" viewBox="0 0 10 10"><path d="M1.6 8.4L6.3 3.7" stroke="#505050" stroke-width="2.3"/><path d="M1.4 8.6L0.9 9.1" stroke="#505050" stroke-width="1.4"/><path d="M7.1 2.9L8.6 1.4" stroke="#505050" stroke-width="2.3" stroke-linecap="round"/></svg>
<svg class="a" style="left:1625px;top:367.57px" width="8.2" height="8.6" viewBox="0 0 8 8.6"><path d="M0 0.8H8V1.8H0Z" fill="#dc3545"/><path d="M3 0H5V1H3Z" fill="#dc3545"/><path d="M0.8 2.2H7.2L6.8 8.6H1.2Z" fill="#dc3545"/></svg>
<div style="left:40.20px;top:387.83px;width:11.80px;height:12.20px;background:#fff;border:1px solid #d4d4d4;border-radius:2px;"></div>
<div class="t" style="left:79.20px;top:387.83px;height:14px;line-height:14px;font-size:9.11px;color:#2a2a2a;font-weight:normal;">05.03.2026</div>
<div class="t" style="left:134.50px;top:387.83px;height:14px;line-height:14px;font-size:9.11px;color:#2a2a2a;font-weight:normal;">3131</div>
<div class="t" style="left:740.70px;top:387.83px;height:14px;line-height:14px;font-size:9.3px;color:#2a2a2a;font-weight:normal;">Adana Seyhan</div>
<svg class="a" style="left:1605.6px;top:388.23px" width="9.5" height="9.5" viewBox="0 0 10 10"><path d="M1.6 8.4L6.3 3.7" stroke="#505050" stroke-width="2.3"/><path d="M1.4 8.6L0.9 9.1" stroke="#505050" stroke-width="1.4"/><path d="M7.1 2.9L8.6 1.4" stroke="#505050" stroke-width="2.3" stroke-linecap="round"/></svg>
<svg class="a" style="left:1625px;top:389.23px" width="8.2" height="8.6" viewBox="0 0 8 8.6"><path d="M0 0.8H8V1.8H0Z" fill="#dc3545"/><path d="M3 0H5V1H3Z" fill="#dc3545"/><path d="M0.8 2.2H7.2L6.8 8.6H1.2Z" fill="#dc3545"/></svg>
<div style="left:40.20px;top:409.50px;width:11.80px;height:12.20px;background:#fff;border:1px solid #d4d4d4;border-radius:2px;"></div>
<div class="t" style="left:79.20px;top:409.50px;height:14px;line-height:14px;font-size:9.11px;color:#2a2a2a;font-weight:normal;">09.03.2026</div>
<div class="t" style="left:134.50px;top:409.50px;height:14px;line-height:14px;font-size:9.11px;color:#2a2a2a;font-weight:normal;">3132</div>
<div class="t" style="left:740.70px;top:409.50px;height:14px;line-height:14px;font-size:9.3px;color:#2a2a2a;font-weight:normal;">Adana Seyhan</div>
<svg class="a" style="left:1605.6px;top:409.90px" width="9.5" height="9.5" viewBox="0 0 10 10"><path d="M1.6 8.4L6.3 3.7" stroke="#505050" stroke-width="2.3"/><path d="M1.4 8.6L0.9 9.1" stroke="#505050" stroke-width="1.4"/><path d="M7.1 2.9L8.6 1.4" stroke="#505050" stroke-width="2.3" stroke-linecap="round"/></svg>
<svg class="a" style="left:1625px;top:410.90px" width="8.2" height="8.6" viewBox="0 0 8 8.6"><path d="M0 0.8H8V1.8H0Z" fill="#dc3545"/><path d="M3 0H5V1H3Z" fill="#dc3545"/><path d="M0.8 2.2H7.2L6.8 8.6H1.2Z" fill="#dc3545"/></svg>
<div style="left:40.20px;top:431.17px;width:11.80px;height:12.20px;background:#fff;border:1px solid #d4d4d4;border-radius:2px;"></div>
<div class="t" style="left:79.20px;top:431.17px;height:14px;line-height:14px;font-size:9.11px;color:#2a2a2a;font-weight:normal;">09.03.2026</div>
<div class="t" style="left:134.50px;top:431.17px;height:14px;line-height:14px;font-size:9.11px;color:#2a2a2a;font-weight:normal;">3133</div>
<div class="t" style="left:740.70px;top:431.17px;height:14px;line-height:14px;font-size:9.3px;color:#2a2a2a;font-weight:normal;">Adana Seyhan</div>
<svg class="a" style="left:1605.6px;top:431.57px" width="9.5" height="9.5" viewBox="0 0 10 10"><path d="M1.6 8.4L6.3 3.7" stroke="#505050" stroke-width="2.3"/><path d="M1.4 8.6L0.9 9.1" stroke="#505050" stroke-width="1.4"/><path d="M7.1 2.9L8.6 1.4" stroke="#505050" stroke-width="2.3" stroke-linecap="round"/></svg>
<svg class="a" style="left:1625px;top:432.57px" width="8.2" height="8.6" viewBox="0 0 8 8.6"><path d="M0 0.8H8V1.8H0Z" fill="#dc3545"/><path d="M3 0H5V1H3Z" fill="#dc3545"/><path d="M0.8 2.2H7.2L6.8 8.6H1.2Z" fill="#dc3545"/></svg>
<div style="left:40.20px;top:452.83px;width:11.80px;height:12.20px;background:#fff;border:1px solid #d4d4d4;border-radius:2px;"></div>
<div class="t" style="left:79.20px;top:452.83px;height:14px;line-height:14px;font-size:9.11px;color:#2a2a2a;font-weight:normal;">09.03.2026</div>
<div class="t" style="left:134.50px;top:452.83px;height:14px;line-height:14px;font-size:9.11px;color:#2a2a2a;font-weight:normal;">0000000006</div>
<div class="t" style="left:740.70px;top:452.83px;height:14px;line-height:14px;font-size:9.3px;color:#2a2a2a;font-weight:normal;">İzmir Buca</div>
<svg class="a" style="left:1605.6px;top:453.23px" width="9.5" height="9.5" viewBox="0 0 10 10"><path d="M1.6 8.4L6.3 3.7" stroke="#505050" stroke-width="2.3"/><path d="M1.4 8.6L0.9 9.1" stroke="#505050" stroke-width="1.4"/><path d="M7.1 2.9L8.6 1.4" stroke="#505050" stroke-width="2.3" stroke-linecap="round"/></svg>
<svg class="a" style="left:1625px;top:454.23px" width="8.2" height="8.6" viewBox="0 0 8 8.6"><path d="M0 0.8H8V1.8H0Z" fill="#dc3545"/><path d="M3 0H5V1H3Z" fill="#dc3545"/><path d="M0.8 2.2H7.2L6.8 8.6H1.2Z" fill="#dc3545"/></svg>
<div style="left:40.20px;top:474.50px;width:11.80px;height:12.20px;background:#fff;border:1px solid #d4d4d4;border-radius:2px;"></div>
<div class="t" style="left:79.20px;top:474.50px;height:14px;line-height:14px;font-size:9.11px;color:#2a2a2a;font-weight:normal;">09.03.2026</div>
<div class="t" style="left:134.50px;top:474.50px;height:14px;line-height:14px;font-size:9.11px;color:#2a2a2a;font-weight:normal;">00001</div>
<div class="t" style="left:740.70px;top:474.50px;height:14px;line-height:14px;font-size:9.3px;color:#2a2a2a;font-weight:normal;">İzmir Buca</div>
<svg class="a" style="left:1605.6px;top:474.90px" width="9.5" height="9.5" viewBox="0 0 10 10"><path d="M1.6 8.4L6.3 3.7" stroke="#505050" stroke-width="2.3"/><path d="M1.4 8.6L0.9 9.1" stroke="#505050" stroke-width="1.4"/><path d="M7.1 2.9L8.6 1.4" stroke="#505050" stroke-width="2.3" stroke-linecap="round"/></svg>
<svg class="a" style="left:1625px;top:475.90px" width="8.2" height="8.6" viewBox="0 0 8 8.6"><path d="M0 0.8H8V1.8H0Z" fill="#dc3545"/><path d="M3 0H5V1H3Z" fill="#dc3545"/><path d="M0.8 2.2H7.2L6.8 8.6H1.2Z" fill="#dc3545"/></svg>
<div style="left:40.20px;top:496.17px;width:11.80px;height:12.20px;background:#fff;border:1px solid #d4d4d4;border-radius:2px;"></div>
<div class="t" style="left:79.20px;top:496.17px;height:14px;line-height:14px;font-size:9.11px;color:#2a2a2a;font-weight:normal;">10.03.2026</div>
<div class="t" style="left:134.50px;top:496.17px;height:14px;line-height:14px;font-size:9.11px;color:#2a2a2a;font-weight:normal;">3134</div>
<div class="t" style="left:740.70px;top:496.17px;height:14px;line-height:14px;font-size:9.3px;color:#2a2a2a;font-weight:normal;">Adana Seyhan</div>
<svg class="a" style="left:1605.6px;top:496.57px" width="9.5" height="9.5" viewBox="0 0 10 10"><path d="M1.6 8.4L6.3 3.7" stroke="#505050" stroke-width="2.3"/><path d="M1.4 8.6L0.9 9.1" stroke="#505050" stroke-width="1.4"/><path d="M7.1 2.9L8.6 1.4" stroke="#505050" stroke-width="2.3" stroke-linecap="round"/></svg>
<svg class="a" style="left:1625px;top:497.57px" width="8.2" height="8.6" viewBox="0 0 8 8.6"><path d="M0 0.8H8V1.8H0Z" fill="#dc3545"/><path d="M3 0H5V1H3Z" fill="#dc3545"/><path d="M0.8 2.2H7.2L6.8 8.6H1.2Z" fill="#dc3545"/></svg>
<div style="left:40.20px;top:517.83px;width:11.80px;height:12.20px;background:#fff;border:1px solid #d4d4d4;border-radius:2px;"></div>
<div class="t" style="left:79.20px;top:517.83px;height:14px;line-height:14px;font-size:9.11px;color:#2a2a2a;font-weight:normal;">12.03.2026</div>
<div class="t" style="left:134.50px;top:517.83px;height:14px;line-height:14px;font-size:9.11px;color:#2a2a2a;font-weight:normal;">3135</div>
<div class="t" style="left:740.70px;top:517.83px;height:14px;line-height:14px;font-size:9.3px;color:#2a2a2a;font-weight:normal;">Adana Seyhan</div>
<svg class="a" style="left:1605.6px;top:518.23px" width="9.5" height="9.5" viewBox="0 0 10 10"><path d="M1.6 8.4L6.3 3.7" stroke="#505050" stroke-width="2.3"/><path d="M1.4 8.6L0.9 9.1" stroke="#505050" stroke-width="1.4"/><path d="M7.1 2.9L8.6 1.4" stroke="#505050" stroke-width="2.3" stroke-linecap="round"/></svg>
<svg class="a" style="left:1625px;top:519.23px" width="8.2" height="8.6" viewBox="0 0 8 8.6"><path d="M0 0.8H8V1.8H0Z" fill="#dc3545"/><path d="M3 0H5V1H3Z" fill="#dc3545"/><path d="M0.8 2.2H7.2L6.8 8.6H1.2Z" fill="#dc3545"/></svg>
<div style="left:40.20px;top:539.50px;width:11.80px;height:12.20px;background:#fff;border:1px solid #d4d4d4;border-radius:2px;"></div>
<div class="t" style="left:79.20px;top:539.50px;height:14px;line-height:14px;font-size:9.11px;color:#2a2a2a;font-weight:normal;">12.03.2026</div>
<div class="t" style="left:134.50px;top:539.50px;height:14px;line-height:14px;font-size:9.11px;color:#2a2a2a;font-weight:normal;">3136</div>
<div class="t" style="left:740.70px;top:539.50px;height:14px;line-height:14px;font-size:9.3px;color:#2a2a2a;font-weight:normal;">Adana Seyhan</div>
<svg class="a" style="left:1605.6px;top:539.90px" width="9.5" height="9.5" viewBox="0 0 10 10"><path d="M1.6 8.4L6.3 3.7" stroke="#505050" stroke-width="2.3"/><path d="M1.4 8.6L0.9 9.1" stroke="#505050" stroke-width="1.4"/><path d="M7.1 2.9L8.6 1.4" stroke="#505050" stroke-width="2.3" stroke-linecap="round"/></svg>
<svg class="a" style="left:1625px;top:540.90px" width="8.2" height="8.6" viewBox="0 0 8 8.6"><path d="M0 0.8H8V1.8H0Z" fill="#dc3545"/><path d="M3 0H5V1H3Z" fill="#dc3545"/><path d="M0.8 2.2H7.2L6.8 8.6H1.2Z" fill="#dc3545"/></svg>
<div style="left:40.20px;top:561.17px;width:11.80px;height:12.20px;background:#fff;border:1px solid #d4d4d4;border-radius:2px;"></div>
<div class="t" style="left:79.20px;top:561.17px;height:14px;line-height:14px;font-size:9.11px;color:#2a2a2a;font-weight:normal;">25.03.2026</div>
<div class="t" style="left:134.50px;top:561.17px;height:14px;line-height:14px;font-size:9.11px;color:#2a2a2a;font-weight:normal;">3138</div>
<div class="t" style="left:740.70px;top:561.17px;height:14px;line-height:14px;font-size:9.3px;color:#2a2a2a;font-weight:normal;">Adana Çukurova</div>
<svg class="a" style="left:1605.6px;top:561.57px" width="9.5" height="9.5" viewBox="0 0 10 10"><path d="M1.6 8.4L6.3 3.7" stroke="#505050" stroke-width="2.3"/><path d="M1.4 8.6L0.9 9.1" stroke="#505050" stroke-width="1.4"/><path d="M7.1 2.9L8.6 1.4" stroke="#505050" stroke-width="2.3" stroke-linecap="round"/></svg>
<svg class="a" style="left:1625px;top:562.57px" width="8.2" height="8.6" viewBox="0 0 8 8.6"><path d="M0 0.8H8V1.8H0Z" fill="#dc3545"/><path d="M3 0H5V1H3Z" fill="#dc3545"/><path d="M0.8 2.2H7.2L6.8 8.6H1.2Z" fill="#dc3545"/></svg>
<div style="left:40.20px;top:582.83px;width:11.80px;height:12.20px;background:#fff;border:1px solid #d4d4d4;border-radius:2px;"></div>
<div class="t" style="left:79.20px;top:582.83px;height:14px;line-height:14px;font-size:9.11px;color:#2a2a2a;font-weight:normal;">25.03.2026</div>
<div class="t" style="left:134.50px;top:582.83px;height:14px;line-height:14px;font-size:9.11px;color:#2a2a2a;font-weight:normal;">3139</div>
<div class="t" style="left:740.70px;top:582.83px;height:14px;line-height:14px;font-size:9.3px;color:#2a2a2a;font-weight:normal;">Adana Seyhan</div>
<svg class="a" style="left:1605.6px;top:583.23px" width="9.5" height="9.5" viewBox="0 0 10 10"><path d="M1.6 8.4L6.3 3.7" stroke="#505050" stroke-width="2.3"/><path d="M1.4 8.6L0.9 9.1" stroke="#505050" stroke-width="1.4"/><path d="M7.1 2.9L8.6 1.4" stroke="#505050" stroke-width="2.3" stroke-linecap="round"/></svg>
<svg class="a" style="left:1625px;top:584.23px" width="8.2" height="8.6" viewBox="0 0 8 8.6"><path d="M0 0.8H8V1.8H0Z" fill="#dc3545"/><path d="M3 0H5V1H3Z" fill="#dc3545"/><path d="M0.8 2.2H7.2L6.8 8.6H1.2Z" fill="#dc3545"/></svg>
<div style="left:217.90px;top:211.00px;width:123.60px;height:19.00px;background:#fff;border-radius:10px;"></div>
<div style="left:476.90px;top:212.90px;width:208.50px;height:18.10px;background:#fff;border-radius:10px;"></div>
<div style="left:220.50px;top:255.40px;width:137.50px;height:19.00px;background:#fff;border-radius:10px;"></div>
<div style="left:477.80px;top:255.40px;width:128.40px;height:19.00px;background:#fff;border-radius:10px;"></div>
<div style="left:214.80px;top:300.70px;width:190.10px;height:18.10px;background:#fff;border-radius:10px;"></div>
<div style="left:478.80px;top:298.50px;width:254.20px;height:19.60px;background:#fff;border-radius:10px;"></div>
<div style="left:213.00px;top:342.00px;width:131.70px;height:17.70px;background:#fff;border-radius:10px;"></div>
<div style="left:478.80px;top:343.90px;width:124.20px;height:18.10px;background:#fff;border-radius:10px;"></div>
<div style="left:213.80px;top:382.50px;width:97.00px;height:15.90px;background:#fff;border-radius:10px;"></div>
<div style="left:482.60px;top:388.20px;width:84.00px;height:17.20px;background:#fff;border-radius:10px;"></div>
<div style="left:220.50px;top:430.70px;width:103.60px;height:17.80px;background:#fff;border-radius:10px;"></div>
<div style="left:477.80px;top:426.90px;width:182.90px;height:17.50px;background:#fff;border-radius:10px;"></div>
<div style="left:214.80px;top:471.30px;width:127.70px;height:19.10px;background:#fff;border-radius:10px;"></div>
<div style="left:478.80px;top:471.30px;width:179.70px;height:19.10px;background:#fff;border-radius:10px;"></div>
<div style="left:219.50px;top:514.10px;width:91.30px;height:19.00px;background:#fff;border-radius:10px;"></div>
<div style="left:478.80px;top:514.10px;width:96.30px;height:19.00px;background:#fff;border-radius:10px;"></div>
<div style="left:217.90px;top:556.90px;width:125.20px;height:19.00px;background:#fff;border-radius:10px;"></div>
<div style="left:482.00px;top:560.00px;width:93.10px;height:19.10px;background:#fff;border-radius:10px;"></div>
<div style="left:213.00px;top:318.50px;width:5.00px;height:12.50px;background:#fff;"></div>
<div style="left:473.00px;top:276.50px;width:5.00px;height:12.00px;background:#fff;"></div>
<div style="left:18.00px;top:690.00px;width:22.80px;height:22.00px;background:#d6d6d6;border-radius:2px;"></div>
<div class="t" style="left:18.00px;width:22.80px;text-align:center;top:694.60px;height:14px;line-height:14px;font-size:8.7px;color:#2a2a2a;font-weight:normal;">50</div>
<div class="t" style="left:53.70px;top:694.60px;height:14px;line-height:14px;font-size:8.7px;color:#2a2a2a;font-weight:normal;">100</div>
<div class="t" style="left:85.70px;top:694.60px;height:14px;line-height:14px;font-size:8.7px;color:#2a2a2a;font-weight:normal;">tümü</div>
<div class="t" style="right:86.00px;top:694.00px;height:14px;line-height:14px;font-size:8.7px;color:#666;font-weight:normal;">Sayfa 1 / 1 (19 veri)</div>
<svg class="a" style="left:1599px;top:693.5px" width="8" height="14" viewBox="0 0 8 14"><path d="M7 0.8L1 7L7 13.2" stroke="#bdbdbd" stroke-width="1.2" fill="none"/></svg>
<div style="left:1616.30px;top:690.00px;width:16.70px;height:21.70px;background:#d6d6d6;border-radius:2px;"></div>
<div class="t" style="left:1616.30px;width:16.70px;text-align:center;top:694.00px;height:14px;line-height:14px;font-size:8.7px;color:#2a2a2a;font-weight:normal;">1</div>
<svg class="a" style="left:1639px;top:693.5px" width="8" height="14" viewBox="0 0 8 14"><path d="M1 0.8L7 7L1 13.2" stroke="#bdbdbd" stroke-width="1.2" fill="none"/></svg>
<div style="left:17.30px;top:724.10px;width:1634.70px;height:79.50px;background:#f7f8fa;border-top:1px solid #dfe2e6;"></div>
<div class="t" style="left:25.10px;top:733.40px;height:14px;line-height:14px;font-size:9.8px;color:#222;font-weight:bold;">Toplam Miktar</div>
<div class="t" style="left:25.10px;top:751.70px;height:14px;line-height:14px;font-size:12.8px;color:#222;font-weight:bold;">10</div>
<div class="t" style="left:570.50px;top:733.30px;height:14px;line-height:14px;font-size:9.45px;color:#222;font-weight:bold;">Toplam Ağırlık (KG)</div>
<div class="t" style="left:570.50px;top:751.60px;height:14px;line-height:14px;font-size:12.8px;color:#222;font-weight:bold;">12,000</div>
<div style="left:25.10px;top:774.30px;width:77.80px;height:21.70px;background:#5cb85c;border-radius:3px;"></div>
<div class="t" style="left:25.10px;width:77.80px;text-align:center;top:779.00px;height:14px;line-height:14px;font-size:9.29px;color:#fff;font-weight:normal;">Fatura Oluştur</div>
<div style="left:109.40px;top:774.30px;width:79.20px;height:21.70px;background:#fff;border:1px solid #d0d0d0;border-radius:3px;"></div>
<div class="t" style="left:109.40px;width:79.20px;text-align:center;top:779.00px;height:14px;line-height:14px;font-size:9.21px;color:#2a2a2a;font-weight:normal;">Seçimi Temizle</div>
<div style="left:787.00px;top:328.50px;width:767.00px;height:4.00px;background:#fff;"></div>
<div style="left:787.00px;top:899.00px;width:767.00px;height:4.20px;background:linear-gradient(#d9d9d9,#e6e6e6 60%,rgba(255,255,255,0));"></div>
<div style="left:787.00px;top:332.00px;width:767.00px;height:568.00px;background:#fff;border:1px solid #4682c3;border-radius:4px;"></div>
<div class="t" style="left:796.00px;top:336.30px;height:18px;line-height:18px;font-size:13.1px;color:#2a2a2a;font-weight:normal;">Fatura Oluştur</div>
<svg class="a" style="left:1535.6px;top:337.8px" width="8.6" height="8.6" viewBox="0 0 8.6 8.6"><path d="M0.5 0.5L8.1 8.1M8.1 0.5L0.5 8.1" stroke="#222" stroke-width="1.15"/></svg>
<div style="left:788px;top:355.2px;width:765px;height:543.8px;overflow:hidden;">
<div class="t" style="left:23.00px;top:0.10px;height:14px;line-height:14px;font-size:8.4px;color:#2a2a2a;font-weight:normal;">Cari Adı:</div>
<div style="left:82.10px;top:-3.80px;width:284.50px;height:19.40px;border:1px dashed #cfcfcf;border-radius:3px;background:#fff;"></div>
<div class="t" style="left:23.00px;top:26.50px;height:14px;line-height:14px;font-size:8.4px;color:#2a2a2a;font-weight:normal;">VKN/TCKN:</div>
<div style="left:82.10px;top:23.00px;width:284.50px;height:19.40px;border:1px dashed #cfcfcf;border-radius:3px;background:#fff;"></div>
<div class="t" style="left:86.80px;top:26.40px;height:14px;line-height:14px;font-size:8.65px;color:#2a2a2a;font-weight:normal;">4773510464</div>
<div class="t" style="left:23.00px;top:54.60px;height:14px;line-height:14px;font-size:8.4px;color:#2a2a2a;font-weight:normal;">Vergi Dairesi:</div>
<div style="left:82.10px;top:50.80px;width:284.50px;height:19.40px;border:1px dashed #cfcfcf;border-radius:3px;background:#fff;"></div>
<div class="t" style="left:86.80px;top:54.20px;height:14px;line-height:14px;font-size:8.65px;color:#2a2a2a;font-weight:normal;">Sariçam VD</div>
<div class="t" style="left:23.00px;top:82.10px;height:14px;line-height:14px;font-size:8.4px;color:#2a2a2a;font-weight:normal;">Adres:</div>
<div style="left:82.10px;top:78.00px;width:284.50px;height:19.40px;border:1px dashed #cfcfcf;border-radius:3px;background:#fff;"></div>
<div class="t" style="left:23.00px;top:109.90px;height:14px;line-height:14px;font-size:8.4px;color:#2a2a2a;font-weight:normal;">Şehir:</div>
<div style="left:82.10px;top:106.40px;width:284.50px;height:19.40px;border:1px dashed #cfcfcf;border-radius:3px;background:#fff;"></div>
<div class="t" style="left:86.80px;top:109.80px;height:14px;line-height:14px;font-size:8.65px;color:#2a2a2a;font-weight:normal;">ADANA</div>
<div class="t" style="left:23.00px;top:137.40px;height:14px;line-height:14px;font-size:8.4px;color:#2a2a2a;font-weight:normal;">Telefon:</div>
<div style="left:82.10px;top:133.00px;width:284.50px;height:19.40px;border:1px dashed #cfcfcf;border-radius:3px;background:#fff;"></div>
<div class="t" style="left:23.00px;top:165.10px;height:14px;line-height:14px;font-size:8.4px;color:#2a2a2a;font-weight:normal;">E-posta:</div>
<div style="left:82.10px;top:160.90px;width:284.50px;height:19.40px;border:1px dashed #cfcfcf;border-radius:3px;background:#fff;"></div>
<div style="left:82.00px;top:12.80px;width:120.50px;height:4.00px;background:#fff;"></div>
<div style="left:82.00px;top:150.30px;width:71.00px;height:4.00px;background:#fff;"></div>
<div style="left:82.00px;top:178.30px;width:132.00px;height:4.00px;background:#fff;"></div>
<div class="t" style="left:382.60px;top:-0.10px;height:14px;line-height:14px;font-size:8.4px;color:#2a2a2a;font-weight:normal;">Fatura Tarihi: <span style="color:#d9363e">*</span></div>
<div style="left:459.30px;top:-4.00px;width:267.50px;height:19.40px;border:1px solid #d8d8d8;border-radius:3px;background:#fff;"></div>
<div class="t" style="left:463.80px;top:-0.30px;height:14px;line-height:14px;font-size:8.65px;color:#2a2a2a;font-weight:normal;">25.03.2026</div>
<svg class="a" style="left:713.20px;top:1.00px" width="8.5" height="8.2" viewBox="0 0 8.5 8.2"><path d="M0.65 0.65H7.85V7.55H0.65Z" stroke="#222" stroke-width="1.3" fill="none"/><path d="M0.6 0.6H7.9V2H0.6Z" fill="#222"/><rect x="4.4" y="4" width="2" height="2" fill="#222"/></svg>
<div class="t" style="left:382.60px;top:26.80px;height:14px;line-height:14px;font-size:8.4px;color:#2a2a2a;font-weight:normal;">KDV Oranı: <span style="color:#d9363e">*</span></div>
<div style="left:459.30px;top:23.10px;width:267.50px;height:19.50px;border:1px solid #d8d8d8;border-radius:3px;background:#fff;"></div>
<div class="t" style="left:463.80px;top:26.70px;height:14px;line-height:14px;font-size:8.65px;color:#2a2a2a;font-weight:normal;">KDV %20</div>
<svg class="a" style="left:714.80px;top:30.60px" width="4.6" height="2.6" viewBox="0 0 5 3"><path d="M0 0H5L2.5 3Z" fill="#222"/></svg>
<div class="t" style="left:382.60px;top:55.10px;height:14px;line-height:14px;font-size:8.4px;color:#2a2a2a;font-weight:normal;">Tevkifatlı mı?:</div>
<div style="left:459.30px;top:56.00px;width:11.60px;height:11.90px;border:1px solid #cfcfcf;border-radius:2px;background:#fff;"></div>
<div class="t" style="left:382.60px;top:82.50px;height:14px;line-height:14px;font-size:8.4px;color:#2a2a2a;font-weight:normal;">Tevkifat Nedeni: <span style="color:#d9363e">*</span></div>
<div style="left:459.30px;top:79.10px;width:267.50px;height:19.30px;border:1px solid #e3e3e3;border-radius:3px;background:#fff;"></div>
<div class="t" style="left:463.80px;top:82.70px;height:14px;line-height:14px;font-size:8.45px;color:#b5b5b5;font-weight:normal;">Neden seçin...</div>
<svg class="a" style="left:714.80px;top:86.10px" width="4.6" height="2.6" viewBox="0 0 5 3"><path d="M0 0H5L2.5 3Z" fill="#999"/></svg>
<div class="t" style="left:23.00px;top:192.10px;height:14px;line-height:14px;font-size:8.4px;color:#2a2a2a;font-weight:normal;">Fatura Tipi:</div>
<div style="left:23.10px;top:208.00px;width:343.70px;height:25.40px;border:1px solid #d6d9dd;border-radius:3px;background:#f7f8fa;"></div>
<div class="t" style="left:29.70px;top:214.50px;height:14px;line-height:14px;font-size:8.69px;color:#2a2a2a;font-weight:normal;">E-Arşiv</div>
<div class="t" style="left:23.00px;top:249.60px;height:16px;line-height:16px;font-size:11.0px;color:#2a2a2a;font-weight:bold;">Seçilen Kalemler</div>
<div class="t" style="left:26.40px;top:277.00px;height:14px;line-height:14px;font-size:8.75px;color:#666;font-weight:normal;">Bu sütuna göre gruplamak için bir sütun başlığını buraya sürükleyin</div>
<div style="left:444.30px;top:272.20px;width:19.20px;height:19.20px;background:#fff;border:1px solid #d5d5d5;border-radius:3px;"></div>
<svg class="a" style="left:449.20px;top:276.20px" width="9.6" height="9.6" viewBox="0 0 12 12"><path d="M1.5 6.3A4.5 4.5 0 0 1 9.6 3.6" stroke="#222" stroke-width="1.35" fill="none"/><path d="M11.2 1.2V5.2H7.2Z" fill="#222"/><path d="M10.5 5.7A4.5 4.5 0 0 1 2.4 8.4" stroke="#222" stroke-width="1.35" fill="none"/><path d="M0.8 10.8V6.8H4.8Z" fill="#222"/></svg>
<div style="left:467.40px;top:272.20px;width:40.10px;height:19.20px;background:#fff;border:1px solid #d5d5d5;border-radius:3px;"></div>
<svg class="a" style="left:478.00px;top:276.60px" width="21" height="9" viewBox="0 0 21 9"><path d="M3.6 0.7H0.7V8.3H8.3V6" stroke="#222" stroke-width="1.3" fill="none"/><path d="M3.4 5.8Q3.8 2.6 7.4 2.5" stroke="#222" stroke-width="1.2" fill="none"/><path d="M6.8 0.3V4.8L9.4 2.5Z" fill="#222"/><path d="M16 3.6H20.4L18.2 5.8Z" fill="#222"/></svg>
<div style="left:512.30px;top:272.20px;width:19.20px;height:19.20px;background:#fff;border:1px solid #d5d5d5;border-radius:3px;"></div>
<svg class="a" style="left:517.30px;top:276.80px" width="10" height="9" viewBox="0 0 10 9"><path d="M0.6 0.6H6.4V6.4H0.6Z" stroke="#222" stroke-width="1.2" fill="#fff"/><path d="M5.2 2.2H9.8V9H5.2Z" fill="#222"/><path d="M6.2 4H8.8M6.2 5.6H8.8M6.2 7.2H8.8" stroke="#fff" stroke-width="0.6"/></svg>
<div style="left:547.40px;top:272.20px;width:178.90px;height:19.20px;background:#fff;border:1px solid #d5d5d5;border-radius:3px;"></div>
<svg class="a" style="left:553.00px;top:277.60px" width="9" height="9" viewBox="0 0 10 10"><circle cx="4" cy="4" r="3.1" stroke="#999" stroke-width="1.2" fill="none"/><path d="M6.3 6.3L9.3 9.3" stroke="#999" stroke-width="1.4"/></svg>
<div class="t" style="left:566.00px;top:275.40px;height:14px;line-height:14px;font-size:8.6px;color:#aaa;font-weight:normal;">Ara...</div>
<div style="left:23.40px;top:296.30px;width:703.00px;height:96.90px;background:#fff;border:1px solid #d8d8d8;"></div>
<div style="left:24.40px;top:315.80px;width:701.00px;height:1.00px;background:#dcdcdc;"></div>
<div style="left:24.40px;top:336.80px;width:701.00px;height:2.00px;background:#d8d8d8;"></div>
<div style="left:24.40px;top:369.70px;width:216.40px;height:1.00px;background:#dcdcdc;"></div>
<div style="left:340.90px;top:369.70px;width:384.50px;height:1.00px;background:#dcdcdc;"></div>
<div style="left:75.90px;top:297.30px;width:1.00px;height:94.00px;background:#dcdcdc;"></div>
<div style="left:127.70px;top:297.30px;width:1.00px;height:94.00px;background:#dcdcdc;"></div>
<div style="left:428.10px;top:297.30px;width:1.00px;height:94.00px;background:#dcdcdc;"></div>
<div style="left:502.80px;top:297.30px;width:1.00px;height:94.00px;background:#dcdcdc;"></div>
<div style="left:555.90px;top:297.30px;width:1.00px;height:94.00px;background:#dcdcdc;"></div>
<div style="left:645.80px;top:297.30px;width:1.00px;height:94.00px;background:#dcdcdc;"></div>
<div style="left:706.10px;top:297.30px;width:1.00px;height:94.00px;background:#dcdcdc;"></div>
<div style="left:25.40px;top:388.10px;width:559.30px;height:2.80px;background:#c8c8c8;border-radius:1px;"></div>
<div style="left:44.10px;top:300.80px;width:11.80px;height:11.80px;border:1px solid #d4d4d4;border-radius:2px;background:#fff;"></div>
<div class="t" style="right:656.40px;top:299.90px;height:14px;line-height:14px;font-size:8.6px;color:#777;font-weight:normal;">S.N</div>
<svg class="a" style="left:114.50px;top:301.10px" width="9" height="9" viewBox="0 0 9 9"><path d="M0 0H8.8V1.6Q8.8 2.5 5.7 4.4V8.6H3.1V4.4Q0 2.5 0 1.6Z" fill="#b2b2b2"/></svg>
<div class="t" style="left:133.20px;top:299.90px;height:14px;line-height:14px;font-size:8.6px;color:#777;font-weight:normal;">Mal/Hizmet</div>
<svg class="a" style="left:414.60px;top:301.10px" width="9" height="9" viewBox="0 0 9 9"><path d="M0 0H8.8V1.6Q8.8 2.5 5.7 4.4V8.6H3.1V4.4Q0 2.5 0 1.6Z" fill="#b2b2b2"/></svg>
<svg class="a" style="left:433.50px;top:301.10px" width="9" height="9" viewBox="0 0 9 9"><path d="M0 0H8.8V1.6Q8.8 2.5 5.7 4.4V8.6H3.1V4.4Q0 2.5 0 1.6Z" fill="#b2b2b2"/></svg>
<div class="t" style="right:265.90px;top:299.90px;height:14px;line-height:14px;font-size:8.6px;color:#777;font-weight:normal;">Miktar</div>
<div class="t" style="left:520.60px;top:299.90px;height:14px;line-height:14px;font-size:8.6px;color:#777;font-weight:normal;">Bir...</div>
<svg class="a" style="left:542.20px;top:301.10px" width="9" height="9" viewBox="0 0 9 9"><path d="M0 0H8.8V1.6Q8.8 2.5 5.7 4.4V8.6H3.1V4.4Q0 2.5 0 1.6Z" fill="#b2b2b2"/></svg>
<svg class="a" style="left:561.30px;top:301.10px" width="9" height="9" viewBox="0 0 9 9"><path d="M0 0H8.8V1.6Q8.8 2.5 5.7 4.4V8.6H3.1V4.4Q0 2.5 0 1.6Z" fill="#b2b2b2"/></svg>
<div class="t" style="right:123.30px;top:299.90px;height:14px;line-height:14px;font-size:8.6px;color:#777;font-weight:normal;">Fiyat</div>
<svg class="a" style="left:650.60px;top:301.10px" width="9" height="9" viewBox="0 0 9 9"><path d="M0 0H8.8V1.6Q8.8 2.5 5.7 4.4V8.6H3.1V4.4Q0 2.5 0 1.6Z" fill="#b2b2b2"/></svg>
<div class="t" style="right:63.20px;top:299.90px;height:14px;line-height:14px;font-size:8.6px;color:#777;font-weight:normal;">KDV O.</div>
<svg class="a" style="left:711.00px;top:301.10px" width="9" height="9" viewBox="0 0 9 9"><path d="M0 0H8.8V1.6Q8.8 2.5 5.7 4.4V8.6H3.1V4.4Q0 2.5 0 1.6Z" fill="#b2b2b2"/></svg>
<svg class="a" style="left:81.70px;top:322.40px" width="9.5" height="9.5" viewBox="0 0 10 10"><circle cx="4" cy="4" r="3.1" stroke="#222" stroke-width="1.4" fill="none"/><path d="M6.2 6.2L9.3 9.3" stroke="#222" stroke-width="1.7"/></svg>
<svg class="a" style="left:133.40px;top:322.40px" width="9.5" height="9.5" viewBox="0 0 10 10"><circle cx="4" cy="4" r="3.1" stroke="#222" stroke-width="1.4" fill="none"/><path d="M6.2 6.2L9.3 9.3" stroke="#222" stroke-width="1.7"/></svg>
<svg class="a" style="left:433.90px;top:322.40px" width="9.5" height="9.5" viewBox="0 0 10 10"><circle cx="4" cy="4" r="3.1" stroke="#222" stroke-width="1.4" fill="none"/><path d="M6.2 6.2L9.3 9.3" stroke="#222" stroke-width="1.7"/></svg>
<svg class="a" style="left:509.00px;top:322.40px" width="9.5" height="9.5" viewBox="0 0 10 10"><circle cx="4" cy="4" r="3.1" stroke="#222" stroke-width="1.4" fill="none"/><path d="M6.2 6.2L9.3 9.3" stroke="#222" stroke-width="1.7"/></svg>
<svg class="a" style="left:561.50px;top:322.40px" width="9.5" height="9.5" viewBox="0 0 10 10"><circle cx="4" cy="4" r="3.1" stroke="#222" stroke-width="1.4" fill="none"/><path d="M6.2 6.2L9.3 9.3" stroke="#222" stroke-width="1.7"/></svg>
<svg class="a" style="left:651.50px;top:322.40px" width="9.5" height="9.5" viewBox="0 0 10 10"><circle cx="4" cy="4" r="3.1" stroke="#222" stroke-width="1.4" fill="none"/><path d="M6.2 6.2L9.3 9.3" stroke="#222" stroke-width="1.7"/></svg>
<svg class="a" style="left:711.60px;top:322.40px" width="9.5" height="9.5" viewBox="0 0 10 10"><circle cx="4" cy="4" r="3.1" stroke="#222" stroke-width="1.4" fill="none"/><path d="M6.2 6.2L9.3 9.3" stroke="#222" stroke-width="1.7"/></svg>
<div style="left:44.10px;top:349.10px;width:11.80px;height:11.80px;border:1px solid #d4d4d4;border-radius:2px;background:#fff;"></div>
<div class="t" style="right:659.90px;top:342.00px;height:14px;line-height:14px;font-size:8.6px;color:#2a2a2a;font-weight:normal;">1</div>
<div class="t" style="left:133.20px;top:341.80px;height:14px;line-height:14px;font-size:8.6px;color:#2a2a2a;font-weight:normal;">Trh:2026-01-23</div>
<div class="t" style="left:133.20px;top:354.00px;height:14px;line-height:14px;font-size:8.6px;color:#2a2a2a;font-weight:normal;">Cinsi:asdf TesNo:12326 Gö</div>
<div class="t" style="left:280.30px;top:342.00px;height:14px;line-height:14px;font-size:8.64px;color:#2a2a2a;font-weight:normal;">Adana İrs.=1 Adet:10 Nevi:KOLİ</div>
<div class="t" style="right:265.90px;top:341.80px;height:14px;line-height:14px;font-size:8.6px;color:#2a2a2a;font-weight:normal;">10,000</div>
<div class="t" style="left:520.60px;top:341.80px;height:14px;line-height:14px;font-size:8.6px;color:#2a2a2a;font-weight:normal;">Adet</div>
<div class="t" style="right:123.30px;top:341.80px;height:14px;line-height:14px;font-size:8.6px;color:#2a2a2a;font-weight:normal;">5.224,00</div>
<div class="t" style="right:63.20px;top:341.80px;height:14px;line-height:14px;font-size:8.6px;color:#2a2a2a;font-weight:normal;">%20</div>
<div style="left:199.50px;top:352.80px;width:42.50px;height:6.60px;background:#fff;"></div>
<div style="left:238.00px;top:352.80px;width:14.00px;height:14.00px;background:#fff;"></div>
<div class="t" style="left:30.40px;top:401.40px;height:14px;line-height:14px;font-size:8.6px;color:#2a2a2a;font-weight:normal;">50</div>
<div class="t" style="left:56.80px;top:401.40px;height:14px;line-height:14px;font-size:8.6px;color:#2a2a2a;font-weight:normal;">100</div>
<div class="t" style="left:87.20px;top:401.40px;height:14px;line-height:14px;font-size:8.6px;color:#2a2a2a;font-weight:normal;">tümü</div>
<div class="t" style="right:44.80px;top:397.70px;height:14px;line-height:14px;font-size:8.74px;color:#666;font-weight:normal;">Sayfa 1 / 1 (1 veri)</div>
<div style="left:427.50px;top:434.10px;width:299.30px;height:130.70px;background:#f7f8fa;border:1px solid #dcdfe3;border-radius:4px;"></div>
<div class="t" style="left:439.60px;top:445.40px;height:14px;line-height:14px;font-size:9.0px;color:#2a2a2a;font-weight:normal;">Mal/Hizmet Toplam Tutarı:</div>
<div class="t" style="right:50.00px;top:445.40px;height:14px;line-height:14px;font-size:8.9px;color:#2a2a2a;font-weight:normal;">52.240,00 <svg class="il" width="4.98" height="6.50" viewBox="0 0 8 10" preserveAspectRatio="none"><path d="M2.7 0.3V9.3Q7.2 9.4 7.4 5.2M0.6 5.4L5.6 3.1M0.6 7.6L5.6 5.3" stroke="#2a2a2a" stroke-width="1.0" fill="none"/></svg></div>
<div class="t" style="left:439.60px;top:463.40px;height:14px;line-height:14px;font-size:9.0px;color:#2a2a2a;font-weight:normal;">KDV (%20):</div>
<div class="t" style="right:50.00px;top:463.40px;height:14px;line-height:14px;font-size:8.9px;color:#2a2a2a;font-weight:normal;">10.448,00 <svg class="il" width="4.98" height="6.50" viewBox="0 0 8 10" preserveAspectRatio="none"><path d="M2.7 0.3V9.3Q7.2 9.4 7.4 5.2M0.6 5.4L5.6 3.1M0.6 7.6L5.6 5.3" stroke="#2a2a2a" stroke-width="1.0" fill="none"/></svg></div>
<div style="left:439.00px;top:481.80px;width:276.00px;height:1.00px;background:#dcdcdc;"></div>
<div class="t" style="left:439.60px;top:489.20px;height:15px;line-height:15px;font-size:10.45px;color:#222;font-weight:bold;">Vergiler Dahil Toplam Tutar:</div>
<div class="t" style="right:50.00px;top:489.20px;height:15px;line-height:15px;font-size:10.74px;color:#222;font-weight:bold;">62.688,00 <svg class="il" width="6.01" height="7.84" viewBox="0 0 8 10" preserveAspectRatio="none"><path d="M2.7 0.3V9.3Q7.2 9.4 7.4 5.2M0.6 5.4L5.6 3.1M0.6 7.6L5.6 5.3" stroke="#222" stroke-width="1.6" fill="none"/></svg></div>
<div style="left:439.00px;top:508.50px;width:276.00px;height:1.60px;background:#222;"></div>
<div class="t" style="left:439.60px;top:517.30px;height:16px;line-height:16px;font-size:11.76px;color:#222;font-weight:bold;">Ödenecek Tutar:</div>
<div class="t" style="right:50.00px;top:517.30px;height:16px;line-height:16px;font-size:12.27px;color:#222;font-weight:bold;">62.688,00 <svg class="il" width="6.87" height="8.96" viewBox="0 0 8 10" preserveAspectRatio="none"><path d="M2.7 0.3V9.3Q7.2 9.4 7.4 5.2M0.6 5.4L5.6 3.1M0.6 7.6L5.6 5.3" stroke="#222" stroke-width="1.6" fill="none"/></svg></div>
<div style="left:23.00px;top:499.80px;width:111.90px;height:19.90px;background:#5cb85c;border-radius:3px;"></div>
<div class="t" style="left:23.00px;width:111.90px;text-align:center;top:503.50px;height:14px;line-height:14px;font-size:8.9px;color:#fff;font-weight:normal;">Oluştur</div>
<div style="left:143.00px;top:499.80px;width:111.70px;height:19.90px;background:#337ab7;border-radius:3px;"></div>
<div class="t" style="left:143.00px;width:111.70px;text-align:center;top:503.50px;height:14px;line-height:14px;font-size:8.65px;color:#fff;font-weight:normal;">Oluştur ve Yazdır</div>
<div style="left:750.00px;top:0.50px;width:15.00px;height:543.30px;background:#f6f6f6;"></div>
<svg class="a" style="left:753.00px;top:5.80px" width="9" height="7" viewBox="0 0 9 7"><path d="M4.5 0L9 7H0Z" fill="#a3a3a3"/></svg>
<div style="left:753.20px;top:86.10px;width:9.00px;height:439.50px;background:#8c8c8c;border-radius:5px;"></div>
<svg class="a" style="left:753.00px;top:531.80px" width="9" height="7" viewBox="0 0 9 7"><path d="M0 0H9L4.5 7Z" fill="#a3a3a3"/></svg>
</div>
<div style="left:788.00px;top:355.00px;width:87.00px;height:1.00px;background:#e2e2e2;"></div>
<div style="left:989.60px;top:355.00px;width:563.40px;height:1.00px;background:#e2e2e2;"></div>
<div style="left:787.00px;top:332.00px;width:767.00px;height:568.00px;border:1px solid #4682c3;border-radius:4px;background:transparent;"></div>
</body></html>
